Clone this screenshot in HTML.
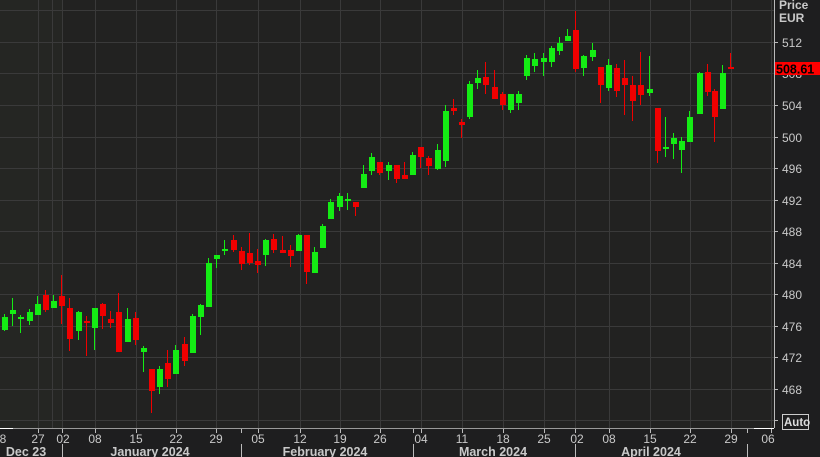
<!DOCTYPE html>
<html><head><meta charset="utf-8"><style>
html,body{margin:0;padding:0;background:#1e1e1e;width:820px;height:457px;overflow:hidden}
svg{display:block}
text{font-family:"Liberation Sans",sans-serif;fill:#c9c9c9}
</style></head><body>
<svg width="820" height="457" viewBox="0 0 820 457" xmlns="http://www.w3.org/2000/svg">
<rect x="0" y="0" width="820" height="457" fill="#1e1e1f"/>
<rect x="0" y="0" width="774" height="428" fill="#222221"/>
<rect x="0" y="0" width="62" height="428" fill="#252623"/>
<g stroke="#3a3a3a" stroke-width="1">
<line x1="0" y1="10.5" x2="774" y2="10.5"/><line x1="0" y1="42.5" x2="774" y2="42.5"/><line x1="0" y1="73.5" x2="774" y2="73.5"/><line x1="0" y1="105.5" x2="774" y2="105.5"/><line x1="0" y1="137.5" x2="774" y2="137.5"/><line x1="0" y1="168.5" x2="774" y2="168.5"/><line x1="0" y1="200.5" x2="774" y2="200.5"/><line x1="0" y1="231.5" x2="774" y2="231.5"/><line x1="0" y1="263.5" x2="774" y2="263.5"/><line x1="0" y1="294.5" x2="774" y2="294.5"/><line x1="0" y1="326.5" x2="774" y2="326.5"/><line x1="0" y1="357.5" x2="774" y2="357.5"/><line x1="0" y1="389.5" x2="774" y2="389.5"/><line x1="0" y1="420.5" x2="774" y2="420.5"/>
<line x1="38.5" y1="0" x2="38.5" y2="428"/><line x1="52.5" y1="0" x2="52.5" y2="428"/><line x1="62.5" y1="0" x2="62.5" y2="428"/><line x1="95.5" y1="0" x2="95.5" y2="428"/><line x1="136.5" y1="0" x2="136.5" y2="428"/><line x1="176.5" y1="0" x2="176.5" y2="428"/><line x1="216.5" y1="0" x2="216.5" y2="428"/><line x1="258.5" y1="0" x2="258.5" y2="428"/><line x1="300.5" y1="0" x2="300.5" y2="428"/><line x1="340.5" y1="0" x2="340.5" y2="428"/><line x1="380.5" y1="0" x2="380.5" y2="428"/><line x1="421.5" y1="0" x2="421.5" y2="428"/><line x1="462.5" y1="0" x2="462.5" y2="428"/><line x1="503.5" y1="0" x2="503.5" y2="428"/><line x1="544.5" y1="0" x2="544.5" y2="428"/><line x1="575.5" y1="0" x2="575.5" y2="428"/><line x1="609.5" y1="0" x2="609.5" y2="428"/><line x1="650.5" y1="0" x2="650.5" y2="428"/><line x1="690.5" y1="0" x2="690.5" y2="428"/><line x1="731.5" y1="0" x2="731.5" y2="428"/><line x1="771.5" y1="0" x2="771.5" y2="428"/>
</g>
<!-- green wicks -->
<path stroke="#14ec14" stroke-width="1" fill="none" d="M4.5 314V331M12.5 298V326M20.5 315V333M29.5 309V325M37.5 296V315M53.5 295V308M78.5 311V340M94.5 308V350M127.5 308V342M143.5 346V372M159.5 366V394M175.5 345V374M192.5 314V353M200.5 304V335M208.5 258V307M216.5 255V268M224.5 240V255M265.5 239V266M298.5 234V251M314.5 247V273M322.5 224V248M330.5 199V219M339.5 193V211M347.5 193V210M363.5 165V188M371.5 153V175M388.5 162V180M412.5 152V175M437.5 144V170M445.5 105V167M469.5 81V119M477.5 70V89M510.5 94V113M518.5 91V110M526.5 55V80M534.5 53V72M543.5 53V76M551.5 46V67M559.5 37V55M567.5 29V41M583.5 55V76M592.5 43V61M608.5 59V91M649.5 56V96M665.5 117V157M673.5 133V159M681.5 137V173M689.5 111V142M699.5 72V114M722.5 65V109"/>
<!-- green bodies -->
<path stroke="#14ec14" stroke-width="6" fill="none" d="M5 317V330M13 310V314M21 317V319M30 312V321M38 304V315M54 301V308M79 312V331M95 308V328M128 319V342M144 348V352M160 369V387M176 350V374M193 316V353M201 305V317M209 263V307M217 255V259M225 249V251M266 240V255M299 235V251M315 252V273M323 226V248M331 202V219M340 196V207M348 199V201M364 174V188M372 157V171M389 165V171M413 155V175M438 150V169M446 111V161M470 84V117M478 78V83M511 94V110M519 94V103M527 58V76M535 59V66M544 58V62M552 48V62M560 43V51M568 36V41M584 56V68M593 50V57M609 65V88M650 89V93M666 147V149M674 138V144M682 141V150M690 117V142M700 73V114M723 73V109"/>
<!-- red wicks -->
<path stroke="#f00000" stroke-width="1" fill="none" d="M45.5 290V312M61.5 275V324M69.5 298V351M86.5 316V356M102.5 303V329M110.5 311V328M118.5 293V352M135.5 312V345M151.5 369V413M167.5 350V387M184.5 337V366M233.5 235V252M241.5 247V270M249.5 233V265M257.5 249V273M273.5 234V253M282.5 236V253M290.5 245V267M306.5 235V284M355.5 202V216M379.5 162V175M396.5 165V183M404.5 162V179M420.5 147V168M428.5 156V175M453.5 99V115M461.5 119V138M485.5 62V94M494.5 70V99M502.5 92V110M575.5 11V72M600.5 67V103M616.5 64V97M624.5 60V115M632.5 76V121M640.5 52V105M657.5 108V163M707.5 64V96M714.5 89V142M730.5 53V69"/>
<!-- red bodies -->
<path stroke="#f00000" stroke-width="6" fill="none" d="M46 295V310M62 296V306M70 308V339M87 321V323M103 304V316M111 319V323M119 312V352M136 318V340M152 369V391M168 363V379M185 344V361M234 240V250M242 251V264M250 253V263M258 261V265M274 239V250M283 250V253M291 250V256M307 235V272M356 202V207M380 162V173M397 165V179M405 175V179M421 147V157M429 158V166M454 108V111M462 122V125M486 77V85M495 87V99M503 94V105M576 30V69M601 67V85M617 68V91M625 78V85M633 85V101M641 85V95M658 108V151M708 72V92M715 91V117M731 67V69"/>
<!-- axes -->
<line x1="774.5" y1="0" x2="774.5" y2="428" stroke="#bbb"/>
<line x1="0" y1="428.5" x2="774" y2="428.5" stroke="#999"/>
<line x1="0" y1="428.5" x2="13" y2="428.5" stroke="#fff"/>
<line x1="754" y1="428.5" x2="774" y2="428.5" stroke="#fff"/>
<g stroke="#bbb">
<line x1="774" y1="42.5" x2="778" y2="42.5"/><line x1="774" y1="73.5" x2="778" y2="73.5"/><line x1="774" y1="105.5" x2="778" y2="105.5"/><line x1="774" y1="137.5" x2="778" y2="137.5"/><line x1="774" y1="168.5" x2="778" y2="168.5"/><line x1="774" y1="200.5" x2="778" y2="200.5"/><line x1="774" y1="231.5" x2="778" y2="231.5"/><line x1="774" y1="263.5" x2="778" y2="263.5"/><line x1="774" y1="294.5" x2="778" y2="294.5"/><line x1="774" y1="326.5" x2="778" y2="326.5"/><line x1="774" y1="357.5" x2="778" y2="357.5"/><line x1="774" y1="389.5" x2="778" y2="389.5"/><line x1="774" y1="420.5" x2="778" y2="420.5"/>
</g>
<g font-size="12">
<text x="779" y="9" font-weight="bold">Price</text>
<text x="779" y="22" font-weight="bold">EUR</text>
<text x="782" y="47">512</text><text x="782" y="78">508</text><text x="782" y="110">504</text><text x="782" y="142">500</text><text x="782" y="173">496</text><text x="782" y="205">492</text><text x="782" y="236">488</text><text x="782" y="268">484</text><text x="782" y="299">480</text><text x="782" y="331">476</text><text x="782" y="362">472</text><text x="782" y="394">468</text>
</g>
<rect x="775" y="62" width="45" height="13" fill="#ff0000"/>
<text x="776" y="73.5" font-size="12.5" font-weight="bold" style="fill:#000">508.61</text>
<rect x="782.5" y="414.5" width="26" height="15" fill="none" stroke="#ccc"/>
<text x="784" y="426" font-size="11.5" font-weight="bold" style="fill:#ddd">Auto</text>
<g stroke="#bbb">
<line x1="38.5" y1="429" x2="38.5" y2="433"/><line x1="62.5" y1="429" x2="62.5" y2="433"/><line x1="95.5" y1="429" x2="95.5" y2="433"/><line x1="136.5" y1="429" x2="136.5" y2="433"/><line x1="176.5" y1="429" x2="176.5" y2="433"/><line x1="216.5" y1="429" x2="216.5" y2="433"/><line x1="241.5" y1="429" x2="241.5" y2="433"/><line x1="258.5" y1="429" x2="258.5" y2="433"/><line x1="300.5" y1="429" x2="300.5" y2="433"/><line x1="340.5" y1="429" x2="340.5" y2="433"/><line x1="380.5" y1="429" x2="380.5" y2="433"/><line x1="413.5" y1="429" x2="413.5" y2="433"/><line x1="421.5" y1="429" x2="421.5" y2="433"/><line x1="462.5" y1="429" x2="462.5" y2="433"/><line x1="503.5" y1="429" x2="503.5" y2="433"/><line x1="544.5" y1="429" x2="544.5" y2="433"/><line x1="575.5" y1="429" x2="575.5" y2="433"/><line x1="609.5" y1="429" x2="609.5" y2="433"/><line x1="650.5" y1="429" x2="650.5" y2="433"/><line x1="690.5" y1="429" x2="690.5" y2="433"/><line x1="731.5" y1="429" x2="731.5" y2="433"/><line x1="747.5" y1="429" x2="747.5" y2="433"/><line x1="771.5" y1="429" x2="771.5" y2="433"/>
<line x1="62.5" y1="444" x2="62.5" y2="457"/><line x1="241.5" y1="444" x2="241.5" y2="457"/><line x1="575.5" y1="444" x2="575.5" y2="457"/><line x1="747.5" y1="444" x2="747.5" y2="457"/><line x1="413.5" y1="444" x2="413.5" y2="457"/>
</g>
<g font-size="12" text-anchor="middle">
<text x="3" y="443">8</text><text x="38" y="443">27</text><text x="63" y="443">02</text><text x="95" y="443">08</text><text x="136" y="443">15</text><text x="176" y="443">22</text><text x="216" y="443">29</text><text x="258" y="443">05</text><text x="300" y="443">12</text><text x="340" y="443">19</text><text x="380" y="443">26</text><text x="421" y="443">04</text><text x="462" y="443">11</text><text x="503" y="443">18</text><text x="544" y="443">25</text><text x="577" y="443">02</text><text x="609" y="443">08</text><text x="650" y="443">15</text><text x="690" y="443">22</text><text x="731" y="443">29</text><text x="768" y="443">06</text>
</g>
<g font-size="12.5" font-weight="bold" text-anchor="middle">
<text x="26" y="456">Dec 23</text><text x="150" y="456">January 2024</text><text x="325" y="456">February 2024</text><text x="493" y="456">March 2024</text><text x="651" y="456">April 2024</text>
</g>
</svg>
</body></html>
